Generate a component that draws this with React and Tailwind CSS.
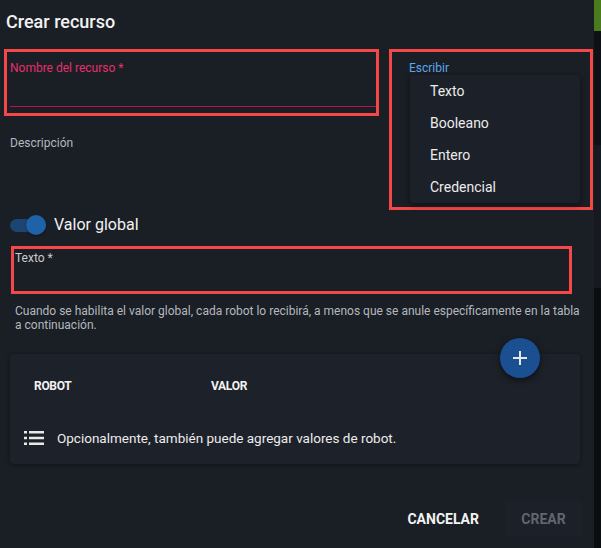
import React from 'react';

const font = { fontFamily: 'Roboto, "Noto Sans", sans-serif' };

const ListIcon = () => (
    <svg width="20" height="14" viewBox="0 0 20 14" className="shrink-0">
        <rect x="0" y="0" width="3" height="2.5" fill="#e8e8e8" />
        <rect x="0" y="5.75" width="3" height="2.5" fill="#e8e8e8" />
        <rect x="0" y="11.5" width="3" height="2.5" fill="#e8e8e8" />
        <rect x="5" y="0" width="15" height="2.5" fill="#e8e8e8" />
        <rect x="5" y="5.75" width="15" height="2.5" fill="#e8e8e8" />
        <rect x="5" y="11.5" width="15" height="2.5" fill="#e8e8e8" />
    </svg>
);

const types = ['Texto', 'Booleano', 'Entero', 'Credencial'];

export default function App() {
    return (
        <div className="w-[601px] h-[548px] flex bg-[#1a1e25] overflow-hidden" style={font}>
            <div className="w-[594px] h-full flex flex-col">
                {/* title */}
                <div className="h-[49px] pl-[6px] pt-[10px]">
                    <h2 className="text-[18px] leading-[24px] font-medium text-[#f2f2f2]">Crear recurso</h2>
                </div>

                {/* nombre + tipo */}
                <div className="flex items-start pl-[4px] gap-[10px]">
                    <div className="w-[375px] flex flex-col">
                        <div className="h-[67px] border-[3px] border-[#f44848] flex flex-col pl-[3px] pt-[8px]">
                            <span className="text-[12px] leading-[16px] text-[#e6306a]">Nombre del recurso *</span>
                            <div className="mt-auto mb-[6px] h-px bg-[#c0104a]" />
                        </div>
                        <span className="mt-[19px] pl-[6px] text-[12px] leading-[16px] text-[#b4b8be]">Descripción</span>
                    </div>
                    <div className="w-[204px] h-[161px] border-[3px] border-[#f44848] flex flex-col pt-[8px]">
                        <span className="pl-[17px] text-[12px] leading-[16px] text-[#5aa9ee]">Escribir</span>
                        <div className="ml-[18px] w-[170px] mt-[-1px] bg-[#1c2028] rounded shadow-[0_2px_6px_rgba(0,0,0,0.45)] flex flex-col">
                            {types.map(t => (
                                <div key={t} className="h-[32px] flex items-center pl-[20px] text-[14px] text-[#ececec]">
                                    {t}
                                </div>
                            ))}
                        </div>
                    </div>
                </div>

                {/* valor global switch */}
                <div className="mt-[3px] h-[24px] flex items-center pl-[10px]">
                    <div className="relative w-[36px] h-[13px] rounded-full bg-[#1d4572]">
                        <div className="absolute left-[16px] top-[-4px] w-[20px] h-[20px] rounded-full bg-[#1e62a8] shadow-[0_1px_2px_rgba(0,0,0,0.4)]" />
                    </div>
                    <span className="ml-[8px] text-[16px] text-[#f2f2f2]">Valor global</span>
                </div>

                {/* texto field */}
                <div className="mt-[9px] ml-[11px] w-[561px] h-[48px] border-[3px] border-[#f44848] flex flex-col pl-[1px] pt-[1px]">
                    <span className="block text-[12px] leading-[16px] text-[#c8cbd0]">Texto *</span>
                </div>

                <div className="mt-[10px] pl-[15px] text-[12px] leading-[14px] text-[#b4b8be]">
                    <div className="whitespace-nowrap">Cuando se habilita el valor global, cada robot lo recibirá, a menos que se anule específicamente en la tabla</div>
                    <div>a continuación.</div>
                </div>

                {/* robot values table */}
                <div className="relative mt-[22px] ml-[10px] w-[570px] h-[110px] bg-[#1d2129] rounded shadow-[0_1px_4px_rgba(0,0,0,0.35)] flex flex-col">
                    <button className="absolute right-[40px] top-[-16px] w-[40px] h-[40px] rounded-full bg-[#1a4f92] shadow-[0_3px_6px_rgba(0,0,0,0.5)] flex items-center justify-center">
                        <svg width="16" height="16" viewBox="0 0 16 16">
                            <path d="M8 1v14M1 8h14" stroke="#e8e8e8" strokeWidth="2" />
                        </svg>
                    </button>
                    <div className="h-[56px] pt-[8px] flex items-center text-[12px] font-bold text-[#f2f2f2] tracking-[-0.3px]">
                        <span className="pl-[24px] w-[201px]">ROBOT</span>
                        <span>VALOR</span>
                    </div>
                    <div className="mt-[18px] flex items-center gap-[13px] pl-[14px]">
                        <ListIcon />
                        <span className="text-[13.5px] text-[#ececec]">Opcionalmente, también puede agregar valores de robot.</span>
                    </div>
                </div>

                {/* actions */}
                <div className="mt-auto mb-[11px] flex justify-end items-center pr-[12px]">
                    <button className="h-[36px] px-[8px] text-[14px] font-bold text-[#f2f2f2]">CANCELAR</button>
                    <button className="ml-[18px] h-[36px] w-[77px] rounded bg-[#1c2028] text-[14px] font-bold text-[#62666d]">CREAR</button>
                </div>
            </div>

            {/* background strip of page behind dialog */}
            <div className="w-[7px] h-full flex flex-col">
                <div className="h-[31px] bg-[#4b7b1c]" />
                <div className="h-[114px] bg-[#0d1014]" />
                <div className="h-[143px] bg-[#161a20]" />
                <div className="flex-1 bg-[#0b0e11]" />
            </div>
        </div>
    );
}
